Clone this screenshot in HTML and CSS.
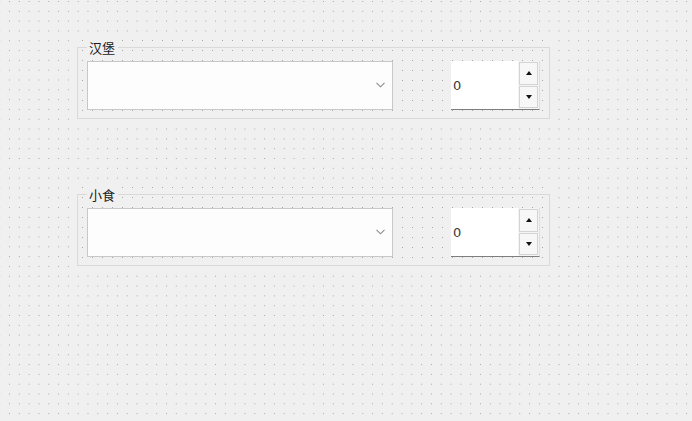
FILE: index.html
```html
<!DOCTYPE html>
<html lang="zh">
<head>
<meta charset="utf-8">
<title>Form</title>
<link rel="stylesheet" href="styles.css">
</head>
<body>
<div class="form">
  <div class="group">
    <span class="group-title">汉堡</span>
    <div class="group-frame">
      <div class="combo">
        <svg class="chevron" width="9" height="6" viewBox="0 0 9 6"><path d="M0.5 0.8 L4.5 4.8 L8.5 0.8" fill="none" stroke="#8a8a8a" stroke-width="1.1"/></svg>
      </div>
      <div class="spin">
        <span class="spin-value">0</span>
        <div class="spin-buttons">
          <div class="spin-btn"><span class="arrow-up"></span></div>
          <div class="spin-btn"><span class="arrow-down"></span></div>
        </div>
      </div>
    </div>
  </div>
  <div class="group">
    <span class="group-title">小食</span>
    <div class="group-frame">
      <div class="combo">
        <svg class="chevron" width="9" height="6" viewBox="0 0 9 6"><path d="M0.5 0.8 L4.5 4.8 L8.5 0.8" fill="none" stroke="#8a8a8a" stroke-width="1.1"/></svg>
      </div>
      <div class="spin">
        <span class="spin-value">0</span>
        <div class="spin-buttons">
          <div class="spin-btn"><span class="arrow-up"></span></div>
          <div class="spin-btn"><span class="arrow-down"></span></div>
        </div>
      </div>
    </div>
  </div>
</div>
</body>
</html>
```
FILE: styles.css
```css
html, body {
  margin: 0;
  padding: 0;
  height: 100%;
}
body {
  background-color: #f0f0f0;
  background-image: radial-gradient(circle at 0.5px 0.5px, #a8a8a8 0.6px, transparent 0.9px);
  background-size: 9.82px 9.82px;
  background-position: 9px 1px;
  font-family: "Noto Sans CJK SC", "Noto Sans", sans-serif;
  overflow: hidden;
}
.form {
  padding: 40px 0 0 77px;
  display: flex;
  flex-direction: column;
  gap: 67px;
}
.group {
  position: relative;
  width: 473px;
  height: 80px;
  background-color: #f0f0f0;
  background-image: radial-gradient(circle at 0.5px 0.5px, #a8a8a8 0.6px, transparent 0.9px);
  background-size: 10px 10px;
  background-position: 5px 0px;
}
.group-title {
  position: absolute;
  left: 10px;
  top: 0;
  padding: 0 3px 0 2px;
  background: #f0f0f0;
  font-size: 13px;
  line-height: 15px;
  color: #1a1a1a;
}
.group-frame {
  box-sizing: border-box;
  margin-top: 7px;
  height: 72px;
  border: 1px solid #d9d9d9;
  padding: 13px 9px 0 9px;
  display: flex;
  align-items: flex-start;
}
.combo {
  position: relative;
  box-sizing: border-box;
  width: 306px;
  height: 49px;
  border: 1px solid #c8c8c8;
  background: #fdfdfd;
  display: flex;
  align-items: center;
  justify-content: flex-end;
  padding-right: 7px;
}
.chevron {
  display: block;
  margin-top: -1px;
}
.spin {
  box-sizing: border-box;
  margin-left: 58px;
  width: 89px;
  height: 49px;
  display: flex;
  background: #f4f4f4;
  border-right: 1px solid #dedede;
  border-bottom: 1px solid #7e7e7e;
}
.spin-value {
  flex: 1;
  background: #ffffff;
  font-family: "DejaVu Sans", sans-serif;
  font-size: 13px;
  color: #3a3a3a;
  display: flex;
  align-items: center;
  padding-left: 2px;
  padding-top: 1px;
}
.spin-buttons {
  width: 19px;
  padding: 1px 1px 1px 1px;
  display: flex;
  flex-direction: column;
  gap: 1px;
}
.spin-btn {
  flex: 1;
  border: 1px solid #d4d4d4;
  background: #f7f7f7;
  display: flex;
  align-items: center;
  justify-content: center;
}
.arrow-up {
  width: 0;
  height: 0;
  border-left: 3.5px solid transparent;
  border-right: 3.5px solid transparent;
  border-bottom: 4px solid #111;
}
.arrow-down {
  width: 0;
  height: 0;
  border-left: 3.5px solid transparent;
  border-right: 3.5px solid transparent;
  border-top: 4px solid #111;
}
```
